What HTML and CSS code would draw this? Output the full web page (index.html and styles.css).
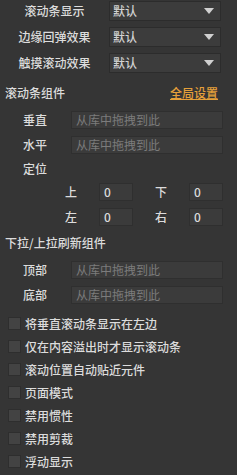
FILE: index.html
```html
<!DOCTYPE html>
<html lang="zh-CN">
<head>
    <meta charset="UTF-8">
    <title>滚动条设置</title>
    <link rel="stylesheet" href="styles.css">
</head>
<body>
    <!-- 下拉选项 -->
    <div class="top">
        <div class="sel-row">
            <span class="sel-label">滚动条显示</span>
            <div class="select"><span>默认</span><i class="arrow"></i></div>
        </div>
        <div class="sel-row">
            <span class="sel-label">边缘回弹效果</span>
            <div class="select"><span>默认</span><i class="arrow"></i></div>
        </div>
        <div class="sel-row">
            <span class="sel-label">触摸滚动效果</span>
            <div class="select"><span>默认</span><i class="arrow"></i></div>
        </div>
    </div>

    <!-- 滚动条组件 -->
    <div class="section-head">
        <span>滚动条组件</span>
        <a class="link" href="#">全局设置</a>
    </div>
    <div class="fields">
        <div class="field">
            <span class="field-label">垂直</span>
            <div class="input placeholder">从库中拖拽到此</div>
        </div>
        <div class="field">
            <span class="field-label">水平</span>
            <div class="input placeholder">从库中拖拽到此</div>
        </div>
    </div>
    <div class="sub-label">定位</div>
    <div class="pos-grid">
        <span>上</span><div class="num">0</div>
        <span>下</span><div class="num">0</div>
        <span>左</span><div class="num">0</div>
        <span>右</span><div class="num">0</div>
    </div>

    <!-- 刷新组件 -->
    <div class="section-head second">
        <span>下拉/上拉刷新组件</span>
    </div>
    <div class="fields">
        <div class="field">
            <span class="field-label">顶部</span>
            <div class="input placeholder">从库中拖拽到此</div>
        </div>
        <div class="field">
            <span class="field-label">底部</span>
            <div class="input placeholder">从库中拖拽到此</div>
        </div>
    </div>

    <!-- 复选项 -->
    <div class="checks">
        <label class="check"><i class="box"></i>将垂直滚动条显示在左边</label>
        <label class="check"><i class="box"></i>仅在内容溢出时才显示滚动条</label>
        <label class="check"><i class="box"></i>滚动位置自动贴近元件</label>
        <label class="check"><i class="box"></i>页面模式</label>
        <label class="check"><i class="box"></i>禁用惯性</label>
        <label class="check"><i class="box"></i>禁用剪裁</label>
        <label class="check"><i class="box"></i>浮动显示</label>
    </div>
</body>
</html>
```
FILE: styles.css
```css
/* 面板基础 */
body {
    margin: 0;
    width: 237px;
    height: 475px;
    overflow: hidden;
    background-color: #353535;
    color: #dcdcdc;
    font-family: "Noto Sans CJK SC", "Noto Sans", sans-serif;
    font-size: 12px;
    font-weight: 500;
    line-height: 16px;
}

.top {
    padding-top: 1px;
    display: flex;
    flex-direction: column;
    gap: 6px;
}

.sel-row {
    display: flex;
    align-items: center;
    height: 20px;
}

.sel-label {
    width: 109px;
    text-align: center;
}

.select {
    width: 112px;
    height: 20px;
    box-sizing: border-box;
    border: 1px solid #2c2c2c;
    background-color: #3c3c3c;
    color: #d2d2d2;
    display: flex;
    align-items: center;
    justify-content: space-between;
    padding: 0 6px 0 3px;
}

.arrow {
    width: 0;
    height: 0;
    border-left: 5px solid transparent;
    border-right: 5px solid transparent;
    border-top: 6px solid #d0d0d0;
}

.section-head {
    display: flex;
    justify-content: space-between;
    margin-top: 12px;
    padding: 0 19px 0 5px;
    height: 16px;
}

.section-head.second {
    margin-top: 9px;
}

.link {
    color: #e5a03a;
    text-decoration: underline;
}

.fields {
    margin-top: 10px;
    display: flex;
    flex-direction: column;
    gap: 7px;
}

.field {
    display: flex;
    align-items: center;
    padding-left: 23px;
    height: 18px;
}

.field-label {
    width: 48px;
}

.input {
    width: 152px;
    height: 18px;
    box-sizing: border-box;
    border: 1px solid #2f2f2f;
    background-color: #3b3b3b;
    padding-left: 4px;
    line-height: 16px;
}

.placeholder {
    color: #7c7c7c;
    font-weight: 400;
}

.sub-label {
    margin-top: 7px;
    padding-left: 23px;
}

.pos-grid {
    margin-top: 6px;
    padding-left: 65px;
    display: grid;
    grid-template-columns: 34px 34px 22px 34px 34px;
    row-gap: 7px;
    align-items: center;
}

.pos-grid span:nth-child(3),
.pos-grid span:nth-child(7) {
    grid-column: 4;
}

.num {
    height: 18px;
    box-sizing: border-box;
    border: 1px solid #2f2f2f;
    background-color: #3b3b3b;
    padding-left: 4px;
    line-height: 16px;
}

.checks {
    margin-top: 8px;
    display: flex;
    flex-direction: column;
}

.check {
    display: flex;
    align-items: center;
    height: 23px;
    padding-left: 8px;
}

.box {
    width: 13px;
    height: 13px;
    box-sizing: border-box;
    border: 1px solid #2e2e2e;
    background-color: #434343;
    margin-right: 4px;
}
```
